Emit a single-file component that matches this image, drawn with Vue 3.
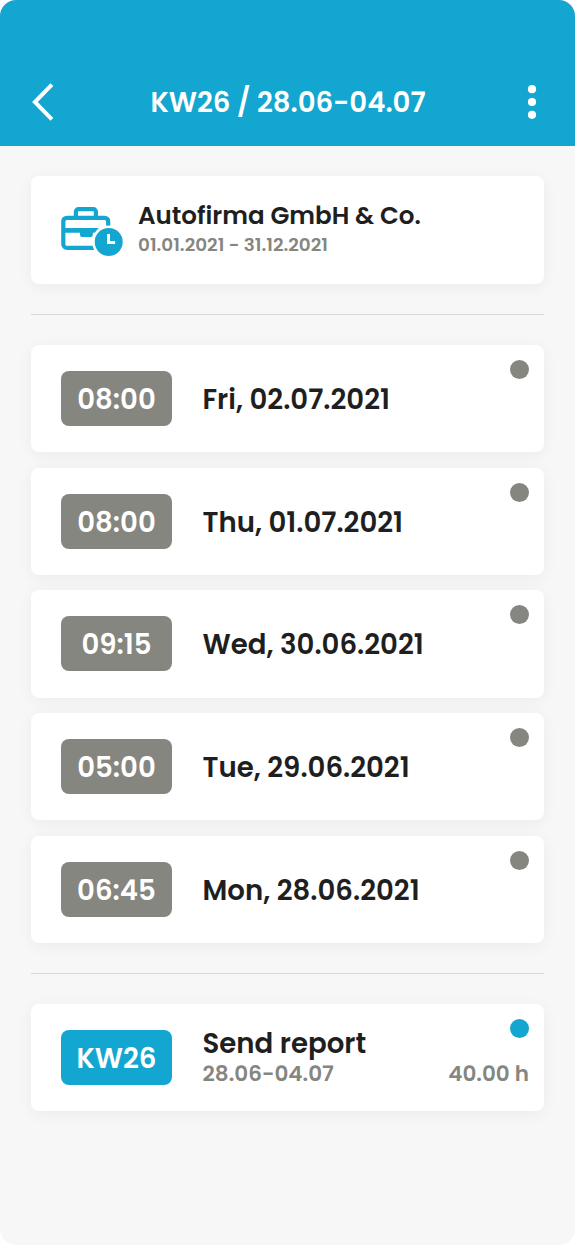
<script setup>
const days = [
  { id: 'fri', hours: '08:00', label: 'Fri, 02.07.2021' },
  { id: 'thu', hours: '08:00', label: 'Thu, 01.07.2021' },
  { id: 'wed', hours: '09:15', label: 'Wed, 30.06.2021' },
  { id: 'tue', hours: '05:00', label: 'Tue, 29.06.2021' },
  { id: 'mon', hours: '06:45', label: 'Mon, 28.06.2021' },
]
</script>

<template>
  <div class="screen">
    <header class="bar">
      <svg class="back" width="24" height="40" viewBox="0 0 24 40"><path d="M20.900 2.700 3.900 20l17 17.300" /></svg>
      <h1 class="title">KW26 / 28.06-04.07</h1>
      <svg class="more" width="10" height="36" viewBox="0 0 10 36">
        <circle cx="5" cy="5.200" r="4.100" />
        <circle cx="5" cy="18" r="4.100" />
        <circle cx="5" cy="30.800" r="4.100" />
      </svg>
    </header>
    <main class="content">
      <section class="card company">
        <svg class="case" width="64" height="52" viewBox="0.700 -1.200 64 52">
          <g class="line">
            <path d="M47.900 21V16.200a3.600 3.600 0 0 0-3.600-3.600H6.600a3.600 3.600 0 0 0-3.600 3.600V39.100a3.600 3.600 0 0 0 3.600 3.600H35" />
            <path d="M15.600 11.500V6.500a2.600 2.600 0 0 1 2.600-2.600h14.800a2.600 2.600 0 0 1 2.600 2.600V11.500" />
          </g>
          <path class="fill" d="M2 22.800H38.500L34.500 27.600H32.500V29.800Q32.500 31.800 30.500 31.800H21.700Q19.700 31.800 19.700 29.800V27.600H2Z" />
          <circle class="clock" cx="48.400" cy="36.800" r="14" />
          <path class="hands" d="M48.200 28.800V37.300H54.800" />
        </svg>
        <div class="stack">
          <h2 class="name">Autofirma GmbH &amp; Co.</h2>
          <p class="range">01.01.2021 - 31.12.2021</p>
        </div>
      </section>
      <hr class="rule" />
      <ul class="days">
        <li v-for="day in days" :key="day.id" class="card">
          <span class="pill">{{ day.hours }}</span>
          <span class="label">{{ day.label }}</span>
          <i class="dot"></i>
        </li>
      </ul>
      <hr class="rule" />
      <section class="card report">
        <span class="pill accent">KW26</span>
        <div class="stack">
          <h2 class="label">Send report</h2>
          <p class="meta"><span>28.06-04.07</span><span>40.00 h</span></p>
        </div>
        <i class="dot accent"></i>
      </section>
    </main>
  </div>
</template>

<style>
html, body { background: #fff; }
</style>
<style scoped>
.screen { box-sizing: border-box; height: 1245px; overflow: hidden; border-radius: 16px; background: #f7f7f7; color: #1f1f1f; font-family: Poppins, Inter, sans-serif; font-weight: 600; }
h1, h2, p, ul { margin: 0; padding: 0; font-weight: 600; }
svg { display: block; flex: none; }
.bar { box-sizing: border-box; display: grid; grid-template-columns: 24px 1fr 24px; align-items: center; height: 145.500px; padding: 58px 30px 0 31px; background: #12a6d0; color: #fff; }
.back { fill: none; stroke: #fff; stroke-width: 4; }
.more { fill: #fff; justify-self: center; margin-right: 3px; }
.title { padding-top: 2px; text-align: center; font-size: 27.600px; line-height: 40px; }
.content { padding: 30.800px 31px 0; }
.card { position: relative; box-sizing: border-box; display: flex; align-items: center; height: 107.300px; padding: 0 15px 0 30px; border-radius: 8px; background: #fff; box-shadow: 0 3px 16px rgba(0, 0, 0, .05); }
.rule { height: 1px; margin: 30.200px 0; border: 0; background: #d9d9d9; }
.days { display: flex; flex-direction: column; gap: 15.400px; list-style: none; }
.line { fill: none; stroke: #12a6d0; stroke-width: 4.200; }
.fill { fill: #12a6d0; }
.clock { fill: #12a6d0; stroke: #fff; stroke-width: 5; paint-order: stroke; }
.hands { fill: none; stroke: #fff; stroke-width: 3; }
.company .stack { margin: -2px 0 0 13px; }
.name { font-size: 24.550px; line-height: 32px; }
.range { font-size: 18.400px; line-height: 26px; color: #868680; }
.pill { box-sizing: border-box; display: grid; place-items: center; width: 111px; height: 55px; margin-right: 30.500px; padding-top: 3px; border-radius: 8px; background: #868680; color: #fff; font-size: 27.600px; }
.accent { background: #12a6d0; }
.label { font-size: 27.600px; line-height: 34px; }
.days .label { padding-top: 3px; }
.report { margin-top: -0.400px; }
.report .stack { flex: 1; margin-top: -1px; }
.meta { display: flex; justify-content: space-between; font-size: 21.500px; line-height: 26px; color: #868680; }
.dot { position: absolute; top: 15px; right: 15px; width: 19px; height: 19px; border-radius: 50%; }
.dot:not(.accent) { background: #868680; }
</style>
